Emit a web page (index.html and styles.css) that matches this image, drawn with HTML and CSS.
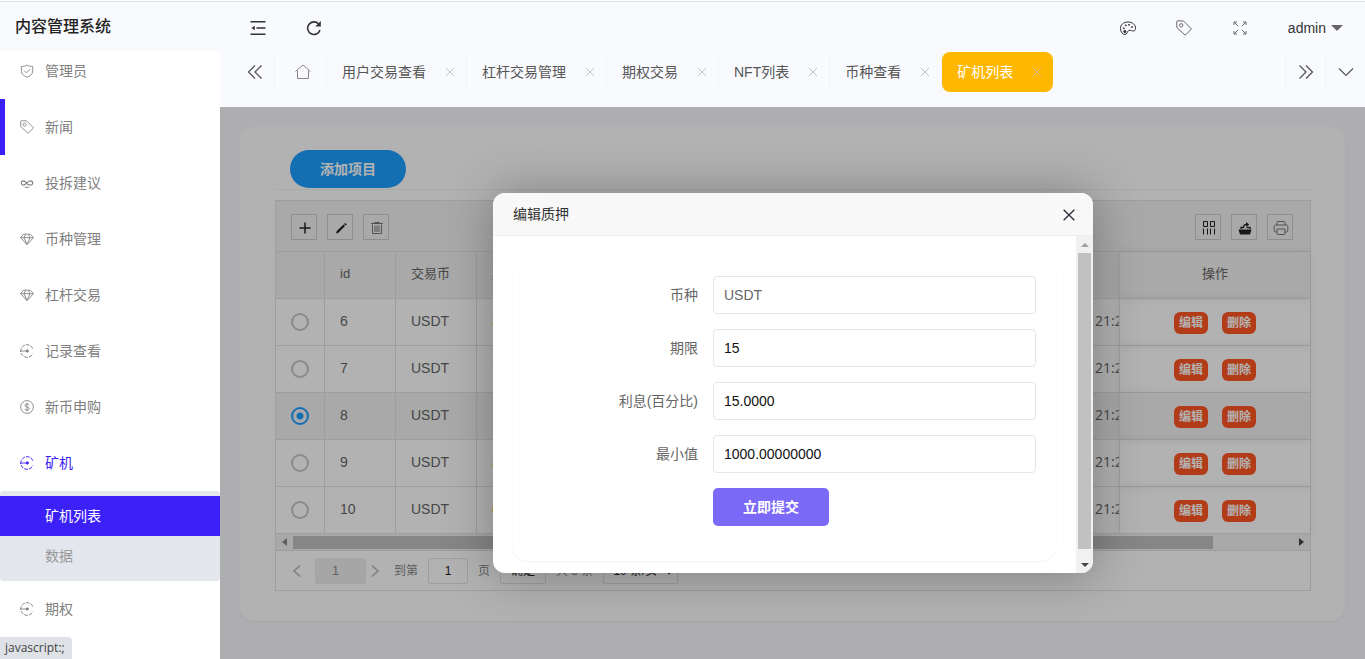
FILE: index.html
```html
<!DOCTYPE html>
<html lang="zh-CN">
<head>
<meta charset="utf-8">
<title>内容管理系统</title>
<link rel="stylesheet" href="styles.css">
</head>
<body>
<svg class="sprite" aria-hidden="true">
  <symbol id="i-shield" viewBox="0 0 16 16"><path d="M8 1.200C6 2.400 4 2.800 1.500 2.800v5.400c0 3 2.600 5.400 6.500 6.800 3.900-1.400 6.500-3.800 6.500-6.800V2.800c-2.500 0-4.500-.4-6.500-1.600zM4.800 7.600l2.500 2.500 4.300-4.300"/></symbol>
  <symbol id="i-tag" viewBox="0 0 16 16"><path d="M.8 1.800Q.8.800 1.800.8L7.500 1l8 8-6.300 6.200L.8 7.500z"/><circle cx="5.200" cy="5.300" r="1.700"/></symbol>
  <symbol id="i-link" viewBox="0 0 16 16"><path d="M9.800 9.300C8.300 10.900 6.800 5.500 4 5.500a2.500 2.500 0 0 0 0 5c2.700 0 4.600-5 8-5a2.500 2.500 0 0 1 0 5c-1 0-1.600-.5-2.200-1.200M5.500 12.800h5" stroke-width="1.300"/></symbol>
  <symbol id="i-gem" viewBox="0 0 16 16"><path d="M4 2.500h8l3.300 4L8 14.500.7 6.500zM1 6.500h14M4.500 6.500 8 14l3.500-7.500M4.500 6.500 6.500 2.500M11.500 6.500l-2-4"/></symbol>
  <symbol id="i-dial" viewBox="0 0 16 16"><path d="M14.700 5.200A7.200 7.200 0 1 0 14.700 10.800" stroke-dasharray="4.200 1.300" stroke-width="1.100"/><path d="M0 8h8"/><circle cx="8.300" cy="8" r="1.300" fill="currentColor"/></symbol>
  <symbol id="i-dollar" viewBox="0 0 16 16"><circle cx="8" cy="8" r="7.300"/><path d="M10.500 5.800C10 4.800 9.200 4.500 8 4.500c-1.500 0-2.400.7-2.400 1.700C5.600 8.600 10.600 7.200 10.600 9.800c0 1.100-1.100 1.800-2.600 1.800-1.400 0-2.300-.5-2.700-1.500M8 3v10"/></symbol>
  <symbol id="i-indent" viewBox="0 0 16 16"><path d="M.5 1.800h15M6.500 8h9M.5 14.200h15" stroke-width="1.600"/><path d="M1.300 8 4.800 5.800v4.400z" fill="currentColor" stroke="none"/></symbol>
  <symbol id="i-refresh" viewBox="0 0 16 16"><path d="M14 10A6.300 6.300 0 1 1 12.500 3.800" stroke-width="1.600"/><path d="M14.800 1v5.500H9.300z" fill="currentColor" stroke="none"/></symbol>
  <symbol id="i-home" viewBox="0 0 16 16"><path d="M.5 7.500 8 1l7.500 6.500M2.500 6.500V14.500h11V6.500"/></symbol>
  <symbol id="i-palette" viewBox="0 0 16 16"><path d="M8 2C3.500 2 .5 4.600.5 8.600c0 3.500 2.300 5.900 4.500 5.900 2.500 0 1.600-3.100 3.800-4 2-.8 3.200.8 5 .5 1.200-.2 1.700-1.300 1.700-2.700C15.500 4.600 12.500 2 8 2z"/><circle cx="4.800" cy="11.500" r="1.100" fill="currentColor"/><circle cx="3.800" cy="8.300" r=".5" fill="currentColor"/><circle cx="5.800" cy="5.300" r=".5" fill="currentColor"/><circle cx="9" cy="4.800" r=".5" fill="currentColor"/><circle cx="12" cy="7" r=".5" fill="currentColor"/></symbol>
  <symbol id="i-full" viewBox="0 0 16 16"><path d="M2 5V2h3M2 2l4.300 4.300M11 2h3v3M14 2 9.700 6.300M2 11v3h3M2 14l4.300-4.300M11 14h3v-3M14 14 9.700 9.700"/></symbol>
  <symbol id="i-left2" viewBox="0 0 16 16"><path d="M8 1.500 1.500 8 8 14.500M14.500 1.500 8 8l6.500 6.500" stroke-width="1.300"/></symbol>
  <symbol id="i-right2" viewBox="0 0 16 16"><path d="M8 1.500l6.500 6.500L8 14.500M1.500 1.500 8 8l-6.500 6.500" stroke-width="1.300"/></symbol>
  <symbol id="i-down" viewBox="0 0 16 16"><path d="M1 4.500l7 7 7-7" stroke-width="1.100"/></symbol>
  <symbol id="i-x" viewBox="0 0 12 12"><path d="M2 2l8 8M10 2l-8 8"/></symbol>
  <symbol id="i-plus" viewBox="0 0 16 16"><path d="M8 2.500v11M2.500 8h11" stroke-width="1.500"/></symbol>
  <symbol id="i-pencil" viewBox="0 0 16 16"><path d="M3 13.500l.8-2.600L10.500 4.600l1.500 1.500-6.600 6.600zM11 4l1.200-1.100 1.600 1.600-1.100 1.100z" fill="currentColor" stroke="none"/></symbol>
  <symbol id="i-trash" viewBox="0 0 16 16"><path d="M2 3.500h12M5.500 3v-.5h5V3M3.500 4.500v9h9v-9M6 5.500v6.500M8 5.500v6.500M10 5.500v6.500"/></symbol>
  <symbol id="i-cols" viewBox="0 0 16 16"><path d="M2.500 1.500h4v5h-4zM9.500 1.500h4v5h-4zM2.500 8.500v6M6.500 8.500v6M9.500 8.500v6M13.500 8.500v6"/></symbol>
  <symbol id="i-export" viewBox="0 0 16 16"><path d="M1.500 9.500h13L13 14.500H3z" fill="currentColor" stroke="none"/><path d="M4 9V7.500h2.500M9.500 7.500H13V9M6.500 8c0-2.500.8-3.600 3-3.600" stroke-width="1.300"/><path d="M9 2 12.300 4.400 9 6.800z" fill="currentColor" stroke="none"/></symbol>
  <symbol id="i-print" viewBox="0 0 16 16"><path d="M4 5V2.500Q4 1.500 5 1.500h6q1 0 1 1V5M4 12H2.500Q1.200 12 1.200 10.500v-4Q1.200 5 2.500 5h11q1.300 0 1.300 1.500v4q0 1.500-1.300 1.500H12M4 9h8v4.500q0 1-1 1H5q-1 0-1-1z"/></symbol>
  <symbol id="i-prev" viewBox="0 0 12 14"><path d="M9 1.500 3 7l6 5.500" stroke-width="1.500"/></symbol>
  <symbol id="i-next" viewBox="0 0 12 14"><path d="M3 1.500 9 7l-6 5.500" stroke-width="1.500"/></symbol>
</svg>

<div class="app">
  <aside class="side">
    <h1 class="brand">内容管理系统</h1>
    <nav class="nav-clip">
      <ul class="nav">
        <li><a class="nav-item" href="#"><svg class="ico"><use href="#i-shield"/></svg>管理员</a></li>
        <li><a class="nav-item marked" href="#"><svg class="ico"><use href="#i-tag"/></svg>新闻</a></li>
        <li><a class="nav-item" href="#"><svg class="ico"><use href="#i-link"/></svg>投拆建议</a></li>
        <li><a class="nav-item" href="#"><svg class="ico"><use href="#i-gem"/></svg>币种管理</a></li>
        <li><a class="nav-item" href="#"><svg class="ico"><use href="#i-gem"/></svg>杠杆交易</a></li>
        <li><a class="nav-item" href="#"><svg class="ico"><use href="#i-dial"/></svg>记录查看</a></li>
        <li><a class="nav-item" href="#"><svg class="ico"><use href="#i-dollar"/></svg>新币申购</a></li>
        <li>
          <a class="nav-item open" href="#"><svg class="ico"><use href="#i-dial"/></svg>矿机</a>
          <ul class="subnav">
            <li><a class="sub-item current" href="#">矿机列表</a></li>
            <li><a class="sub-item" href="#">数据</a></li>
          </ul>
        </li>
        <li><a class="nav-item" href="#"><svg class="ico"><use href="#i-dial"/></svg>期权</a></li>
      </ul>
    </nav>
    <div class="status">javascript:;</div>
  </aside>

  <div class="main">
    <header class="head">
      <div class="topbar">
        <button class="top-btn" aria-label="收起菜单"><svg class="ico-lg"><use href="#i-indent"/></svg></button>
        <button class="top-btn" aria-label="刷新"><svg class="ico-lg"><use href="#i-refresh"/></svg></button>
        <span class="grow"></span>
        <button class="top-btn" aria-label="主题"><svg class="ico-lg"><use href="#i-palette"/></svg></button>
        <button class="top-btn thin" aria-label="便签"><svg class="ico-lg"><use href="#i-tag"/></svg></button>
        <button class="top-btn thin" aria-label="全屏"><svg class="ico-lg"><use href="#i-full"/></svg></button>
        <button class="user">admin<span class="caret"></span></button>
      </div>
      <div class="tabs">
        <button class="tab-ctl" aria-label="向左"><svg class="ico-lg"><use href="#i-left2"/></svg></button>
        <a class="tab-home" href="#" aria-label="首页"><svg class="ico-lg"><use href="#i-home"/></svg></a>
        <div class="tab"><a href="#">用户交易查看</a><button aria-label="关闭"><svg><use href="#i-x"/></svg></button></div>
        <div class="tab"><a href="#">杠杆交易管理</a><button aria-label="关闭"><svg><use href="#i-x"/></svg></button></div>
        <div class="tab"><a href="#">期权交易</a><button aria-label="关闭"><svg><use href="#i-x"/></svg></button></div>
        <div class="tab"><a href="#">NFT列表</a><button aria-label="关闭"><svg><use href="#i-x"/></svg></button></div>
        <div class="tab"><a href="#">币种查看</a><button aria-label="关闭"><svg><use href="#i-x"/></svg></button></div>
        <div class="tab active"><a href="#">矿机列表</a><button aria-label="关闭"><svg><use href="#i-x"/></svg></button></div>
        <span class="grow"></span>
        <button class="tab-ctl end" aria-label="向右"><svg class="ico-lg"><use href="#i-right2"/></svg></button>
        <button class="tab-ctl end" aria-label="更多"><svg class="ico-lg"><use href="#i-down"/></svg></button>
      </div>
    </header>

    <div class="stage">
      <section class="card">
        <div class="card-head"><button class="add">添加项目</button></div>
        <div class="grid-box">
          <div class="tools">
            <button aria-label="新增"><svg class="ico-lg"><use href="#i-plus"/></svg></button>
            <button aria-label="编辑"><svg class="ico-lg"><use href="#i-pencil"/></svg></button>
            <button class="soft" aria-label="删除"><svg class="ico-lg"><use href="#i-trash"/></svg></button>
            <span class="grow"></span>
            <button aria-label="筛选列"><svg class="ico-lg"><use href="#i-cols"/></svg></button>
            <button aria-label="导出"><svg class="ico-lg"><use href="#i-export"/></svg></button>
            <button class="soft" aria-label="打印"><svg class="ico-lg"><use href="#i-print"/></svg></button>
          </div>
          <table class="grid">
            <colgroup><col class="c-radio"><col class="c-id"><col class="c-coin"><col><col class="c-time"><col class="c-act"></colgroup>
            <thead><tr><th></th><th>id</th><th>交易币</th><th>期限</th><th></th><th class="act">操作</th></tr></thead>
            <tbody>
              <tr><td class="pick"><input type="radio" name="row" aria-label="6"></td><td>6</td><td>USDT</td><td class="warm">30</td><td class="time">21:2</td><td class="act"><button>编辑</button><button>删除</button></td></tr>
              <tr><td class="pick"><input type="radio" name="row" aria-label="7"></td><td>7</td><td>USDT</td><td class="warm">7</td><td class="time">21:2</td><td class="act"><button>编辑</button><button>删除</button></td></tr>
              <tr class="on"><td class="pick"><input type="radio" name="row" aria-label="8" checked></td><td>8</td><td>USDT</td><td class="warm">15</td><td class="time">21:2</td><td class="act"><button>编辑</button><button>删除</button></td></tr>
              <tr><td class="pick"><input type="radio" name="row" aria-label="9"></td><td>9</td><td>USDT</td><td class="warm">30</td><td class="time">21:2</td><td class="act"><button>编辑</button><button>删除</button></td></tr>
              <tr><td class="pick"><input type="radio" name="row" aria-label="10"></td><td>10</td><td>USDT</td><td class="warm">60</td><td class="time">21:2</td><td class="act"><button>编辑</button><button>删除</button></td></tr>
            </tbody>
          </table>
          <div class="hbar"><span class="arrow left"></span><span class="h-track"><span class="h-thumb"></span></span><span class="arrow right"></span></div>
          <div class="pager">
            <button class="step" aria-label="上一页"><svg><use href="#i-prev"/></svg></button>
            <span class="page-now">1</span>
            <button class="step" aria-label="下一页"><svg><use href="#i-next"/></svg></button>
            <label class="goto" for="page">到第</label>
            <input id="page" class="page-in" type="text" value="1">
            <span>页</span>
            <button class="ok">确定</button>
            <span>共 5 条</span>
            <select class="size" aria-label="每页条数"><option>10 条/页</option></select>
          </div>
        </div>
      </section>

      <div class="shade">
        <div class="dialog" role="dialog" aria-labelledby="dlg-title">
          <div class="dlg-head"><h2 id="dlg-title">编辑质押</h2><button aria-label="关闭"><svg><use href="#i-x"/></svg></button></div>
          <div class="dlg-body">
            <form class="form">
              <div class="row"><label for="coin">币种</label><input id="coin" class="muted" type="text" value="USDT"></div>
              <div class="row"><label for="term">期限</label><input id="term" type="text" value="15"></div>
              <div class="row"><label for="rate">利息(百分比)</label><input id="rate" type="text" value="15.0000"></div>
              <div class="row"><label for="min">最小值</label><input id="min" type="text" value="1000.00000000"></div>
              <div class="row"><span></span><button type="button" class="submit">立即提交</button></div>
            </form>
            <div class="vbar"><span class="arrow up"></span><span class="v-thumb"></span><span class="arrow down"></span></div>
          </div>
        </div>
      </div>
    </div>
  </div>
</div>
</body>
</html>
```
FILE: styles.css
```css
* { box-sizing: border-box; }
body {
  margin: 0;
  font: 14px/24px "Liberation Sans", "Noto Sans CJK SC", sans-serif;
  color: #555;
  background: #fff;
}
button, input, select { font: inherit; color: inherit; margin: 0; }
button { padding: 0; border: 0; background: none; cursor: pointer; }
a { color: inherit; text-decoration: none; }
ul { list-style: none; margin: 0; padding: 0; }
svg { display: block; fill: none; stroke: currentColor; }
.sprite { position: absolute; width: 0; height: 0; }
.ico { width: 14px; height: 14px; flex: none; }
.ico-lg { width: 16px; height: 16px; flex: none; }
.grow { flex: 1; }

.app {
  display: grid;
  grid-template-columns: 220px minmax(0, 1fr);
  height: 100vh;
  overflow: hidden;
}

/* sidebar */
.side { position: relative; display: flex; flex-direction: column; min-height: 0; background: #fff; }
.brand {
  flex: none;
  height: 50px;
  margin: 0;
  padding-left: 15px;
  background: #f9fafe;
  font-size: 16px;
  font-weight: 500;
  line-height: 50px;
  color: #222;
}
.side, .main { border-top: 1px solid #dce1de; }
.nav-clip { flex: 1; min-height: 0; overflow: hidden; }
.nav { margin-top: -8px; }
.nav-item {
  display: flex;
  align-items: center;
  gap: 11px;
  height: 56px;
  padding-left: 15px;
  border-left: 5px solid transparent;
  color: #808080;
}
.nav-item.marked { border-left-color: #3b20f7; }
.nav-item.open { color: #3b20f7; }
.subnav { padding: 5px 0; border-radius: 3px; background: #e3e6ed; }
.sub-item { display: block; padding-left: 45px; line-height: 40px; color: #999; }
.sub-item.current { background: #3b20f7; color: #fff; }
.status {
  position: absolute;
  left: 0;
  bottom: 0;
  padding: 0 7px 0 5px;
  border-radius: 0 4px 0 0;
  background: #dee1e6;
  color: #444;
  font: 12px/22px "Open Sans", sans-serif;
}

/* header */
.app { padding-top: 1px; }
.main { display: flex; flex-direction: column; min-width: 0; min-height: 0; }
.side .brand { height: 49px; }
.head { flex: none; padding-bottom: 15px; background: #f9fafe; }
.topbar { display: flex; align-items: center; height: 50px; padding: 1px 0 0 10px; color: #333; }
.top-btn { display: grid; place-items: center; width: 56px; height: 50px; }
.top-btn.thin { color: #666; }
.user { display: flex; align-items: center; gap: 5px; padding: 0 22px 0 20px; }
.caret { border: 6px solid transparent; border-top-color: #666; border-bottom: 0; }
.tabs { display: flex; height: 40px; padding-left: 15px; color: #555; }
.tab-ctl { display: grid; place-items: center; width: 40px; border-right: 1px solid #f3f3f5; }
.tab-ctl.end { border-right: 0; border-left: 1px solid #f3f3f5; }
.tab-home { display: flex; align-items: center; padding: 0 15px 0 20px; border-right: 1px solid #f3f3f5; color: #888; }
.tab {
  display: flex;
  align-items: center;
  gap: 18px;
  padding: 0 10px 0 15px;
  border-right: 1px solid #f3f3f5;
  white-space: nowrap;
}
.tab button, .tab svg { width: 12px; height: 12px; color: #c4c4c8; }
.tab.active { border-right: 0; border-radius: 8px; background: #ffb800; color: #fff; }
.tab.active svg { color: #d3b985; }

/* content */
.stage { position: relative; flex: 1; min-height: 0; padding: 20px; overflow: hidden; background: #f9fafe; }
.card { padding: 18px 34px 30px 35px; border-radius: 14px; background: #fff; box-shadow: 0 1px 2px rgba(0, 0, 0, .05); }
.card-head { padding: 5px 15px 1px; border-bottom: 1px solid #f2f2f2; }
.add {
  display: block;
  height: 38px;
  padding: 0 30px;
  border-radius: 19px;
  background: #1e9fff;
  color: #fff;
  font-weight: 700;
}
.grid-box { margin-top: 10px; border: 1px solid #e2e2e2; }
.tools {
  display: flex;
  gap: 10px;
  height: 51px;
  padding: 13px 17px 0 15px;
  border-bottom: 1px solid #e2e2e2;
  background: #f2f2f2;
  color: #222;
}
.tools button { display: grid; place-items: center; width: 26px; height: 26px; padding: 2px 0 0 2px; border: 1px solid #ccc; }
.tools .soft { color: #777; }

.grid { width: 100%; table-layout: fixed; border-spacing: 0; }
.c-radio { width: 49px; }
.c-id { width: 71px; }
.c-coin { width: 81px; }
.c-time { width: 40px; }
.c-act { width: 191px; }
.grid th, .grid td {
  height: 47px;
  padding: 0 15px 2px;
  border-right: 1px solid #e2e2e2;
  border-bottom: 1px solid #e2e2e2;
  overflow: hidden;
  font-weight: 400;
  text-align: left;
  white-space: nowrap;
  color: #666;
}
.grid th { font-size: 13px; }
.grid thead tr, .grid .on { background: #f2f2f2; }
.grid .warm { color: #ffa500; }
.grid .time { padding: 0 0 2px 16px; border-right: 0; font-family: "Open Sans", sans-serif; }
.grid th:nth-child(5) { border-right: 0; }
.grid .act { padding: 0 0 2px; border-left: 1px solid #e2e2e2; border-right: 0; text-align: center; box-shadow: -1px 0 8px rgba(0, 0, 0, .08); }
.grid .act button {
  height: 22px;
  margin: 2px 7px 0;
  padding: 0 5px;
  border-radius: 6px;
  background: #ff5722;
  color: #fff;
  font-size: 12px;
  font-weight: 700;
  line-height: 22px;
  vertical-align: middle;
}
.grid .pick { padding: 0 0 0 15px; }
.pick input {
  appearance: none;
  display: block;
  width: 18px;
  height: 18px;
  border: 2px solid #c6c6c6;
  border-radius: 50%;
}
.pick input:checked { border-color: #1e9fff; background: radial-gradient(circle, #1e9fff 3px, transparent 4px); }

.arrow { flex: none; display: grid; place-items: center; width: 17px; height: 17px; }
.arrow::before { content: ""; border: 4px solid transparent; }
.arrow.left::before { border-left: 0; border-right: 5px solid #888; }
.arrow.right::before { border-right: 0; border-left: 5px solid #444; }
.arrow.up::before { border-top: 0; border-bottom: 4px solid #a0a0a0; }
.arrow.down::before { border-bottom: 0; border-top: 4px solid #444; }
.hbar { display: flex; align-items: center; height: 17px; border-bottom: 1px solid #e2e2e2; background: #f1f1f1; }
.h-track { flex: 1; height: 13px; }
.h-thumb { display: block; width: 92%; height: 13px; background: #c1c1c1; }

.pager { display: flex; align-items: center; height: 39px; padding-left: 12px; font-size: 12px; color: #888; white-space: nowrap; }
.pager > span:not(.page-now) { margin: 0 10px; }
.step { display: grid; place-items: center; width: 17px; color: #b5b5b5; }
.step svg { width: 12px; height: 14px; }
.page-now { width: 51px; height: 26px; margin-left: 10px; padding-right: 10px; border-radius: 3px; background: #eee; text-align: center; line-height: 26px; }
.goto { margin: 0 10px 0 11px; }
.page-in { width: 40px; height: 26px; border: 1px solid #e2e2e2; border-radius: 2px; background: #fff; text-align: center; color: #222; }
.ok { width: 46px; height: 26px; border: 1px solid #e2e2e2; border-radius: 2px; color: #222; }
.size { width: 75px; height: 26px; padding: 0 5px; border: 1px solid #e2e2e2; border-radius: 2px; background: #fff; color: #222; }

/* dialog */
.shade {
  position: absolute;
  inset: 0;
  display: grid;
  place-items: center;
  padding-left: 1px;
  background: rgba(0, 0, 0, .3);
}
.dialog {
  display: flex;
  flex-direction: column;
  width: 600px;
  height: 380px;
  border-radius: 12px;
  overflow: hidden;
  background: #fff;
  box-shadow: 1px 1px 50px rgba(0, 0, 0, .3);
}
.dlg-head {
  flex: none;
  display: flex;
  align-items: center;
  justify-content: space-between;
  height: 43px;
  padding: 0 16px 0 20px;
  border-bottom: 1px solid #eee;
  background: #f8f8f8;
  color: #333;
}
.dlg-head h2 { margin: 0; font-size: 14px; font-weight: 400; }
.dlg-head button { padding-top: 2px; }
.dlg-head svg { width: 16px; height: 16px; color: #2e2d3c; }
.dlg-body { flex: 1; display: flex; min-height: 0; }
.form {
  flex: 1;
  display: flex;
  flex-direction: column;
  gap: 15px;
  margin: 20px 20px 12px;
  padding: 20px 20px 0 0;
  border-radius: 15px;
  box-shadow: 0 1px 2px rgba(0, 0, 0, .05);
}
.row { display: grid; grid-template-columns: 200px 1fr; align-items: center; }
.row label { padding-right: 15px; text-align: right; color: #666; }
.row input { width: 100%; height: 38px; padding: 0 10px; border: 1px solid #e6e6e6; border-radius: 4px; background: #fff; color: #111; }
.row input.muted { color: #666; }
.submit { justify-self: start; height: 38px; padding: 0 30px; border-radius: 5px; background: #7b69f8; color: #fff; font-weight: 700; }
.vbar { flex: none; display: flex; flex-direction: column; align-items: center; width: 17px; background: #f1f1f1; }
.v-thumb { flex: 1; width: 13px; margin-bottom: 7px; background: #c1c1c1; }
```
